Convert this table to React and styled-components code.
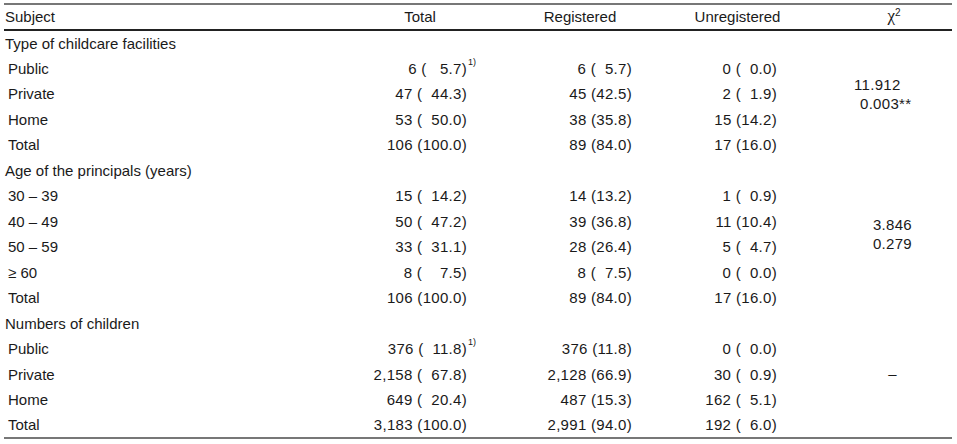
import React from 'react';
import styled, { createGlobalStyle } from 'styled-components';

const GlobalStyle = createGlobalStyle`
  html, body {
    margin: 0;
    padding: 0;
    background: #fff;
  }
  body {
    font-family: "Liberation Sans", Arial, sans-serif;
    color: #1a1a1a;
  }
`;

const Table = styled.table`
  margin: 3px 0 0 4px;
  width: 948px;
  border-collapse: collapse;
  table-layout: fixed;
  font-size: 15px;
  border-top: 2px solid #777;
  border-bottom: 2px solid #777;
`;

const Col = styled.col`
  width: ${(p) => p.$w}px;
`;

const HeadRow = styled.tr`
  height: 26px;
  border-bottom: 2px solid #222;
`;

const Th = styled.th`
  padding: 0 0 2px ${(p) => p.$pl || 0}px;
  font-weight: normal;
  text-align: ${(p) => p.$align || 'center'};
  vertical-align: middle;
  white-space: pre;
`;

const Chi = styled.span`
  font-family: "Liberation Serif", "Times New Roman", serif;
  font-size: 17px;
`;

const Sup = styled.sup`
  font-size: 10px;
  line-height: 0;
  vertical-align: 5px;
`;

const Row = styled.tr`
  height: 25.5px;
`;

const Label = styled.td`
  padding: 0 0 0 ${(p) => (p.$sub ? 4 : 1)}px;
  vertical-align: middle;
  white-space: pre;
`;

const Num = styled.td`
  padding: 0 ${(p) => p.$pr}px 0 0;
  text-align: right;
  vertical-align: middle;
  white-space: pre;
  letter-spacing: 0.3px;
`;

const Value = styled.span`
  position: relative;
`;

const Foot = styled.span`
  position: absolute;
  left: 100%;
  top: -3px;
  font-size: 9px;
  letter-spacing: 0;
  padding-left: 1px;
`;

const ChiCell = styled.td`
  padding: 0 0 0 18px;
  text-align: center;
  vertical-align: middle;
  letter-spacing: 0.3px;
`;

const ChiLine = styled.div`
  line-height: 19.5px;
  white-space: pre;
  text-align: ${(p) => (p.$left !== undefined ? 'left' : 'center')};
  padding-left: ${(p) => p.$left || 0}px;
`;

const PAD = [33, 28, 38];

const sections = [
  {
    title: 'Type of childcare facilities',
    chi: [
      { text: '11.912', left: 21 },
      { text: '0.003**', left: 27 },
    ],
    rows: [
      ['Public', '6 (   5.7)', '6 (  5.7)', '0 (  0.0)', true],
      ['Private', '47 (  44.3)', '45 (42.5)', '2 (  1.9)'],
      ['Home', '53 (  50.0)', '38 (35.8)', '15 (14.2)'],
      ['Total', '106 (100.0)', '89 (84.0)', '17 (16.0)'],
    ],
  },
  {
    title: 'Age of the principals (years)',
    chi: [{ text: '3.846' }, { text: '0.279' }],
    rows: [
      ['30 – 39', '15 (  14.2)', '14 (13.2)', '1 (  0.9)'],
      ['40 – 49', '50 (  47.2)', '39 (36.8)', '11 (10.4)'],
      ['50 – 59', '33 (  31.1)', '28 (26.4)', '5 (  4.7)'],
      ['≥ 60', '8 (    7.5)', '8 (  7.5)', '0 (  0.0)'],
      ['Total', '106 (100.0)', '89 (84.0)', '17 (16.0)'],
    ],
  },
  {
    title: 'Numbers of children',
    chi: [{ text: '–' }],
    rows: [
      ['Public', '376 (  11.8)', '376 (11.8)', '0 (  0.0)', true],
      ['Private', '2,158 (  67.8)', '2,128 (66.9)', '30 (  0.9)'],
      ['Home', '649 (  20.4)', '487 (15.3)', '162 (  5.1)'],
      ['Total', '3,183 (100.0)', '2,991 (94.0)', '192 (  6.0)'],
    ],
  },
];

const App = () => {
  return (
    <>
      <GlobalStyle />
      <Table>
        <colgroup>
          <Col $w={336} />
          <Col $w={160} />
          <Col $w={160} />
          <Col $w={155} />
          <Col $w={137} />
        </colgroup>
        <thead>
          <HeadRow>
            <Th $align="left" $pl={1}>Subject</Th>
            <Th>Total</Th>
            <Th>Registered</Th>
            <Th>Unregistered</Th>
            <Th $pl={21}>
              <Chi>χ</Chi>
              <Sup>2</Sup>
            </Th>
          </HeadRow>
        </thead>
        <tbody>
          {sections.map((sec) => (
            <React.Fragment key={sec.title}>
              <Row>
                <Label>{sec.title}</Label>
                <Num $pr={PAD[0]} />
                <Num $pr={PAD[1]} />
                <Num $pr={PAD[2]} />
                <ChiCell rowSpan={sec.rows.length + 1}>
                  {sec.chi.map((l, i) => (
                    <ChiLine key={i} $left={l.left}>{l.text}</ChiLine>
                  ))}
                </ChiCell>
              </Row>
              {sec.rows.map((r) => (
                <Row key={sec.title + r[0]}>
                  <Label $sub>{r[0]}</Label>
                  <Num $pr={PAD[0]}>
                    <Value>
                      {r[1]}
                      {r[4] && <Foot>1)</Foot>}
                    </Value>
                  </Num>
                  <Num $pr={PAD[1]}>{r[2]}</Num>
                  <Num $pr={PAD[2]}>{r[3]}</Num>
                </Row>
              ))}
            </React.Fragment>
          ))}
        </tbody>
      </Table>
    </>
  );
};

export default App;
